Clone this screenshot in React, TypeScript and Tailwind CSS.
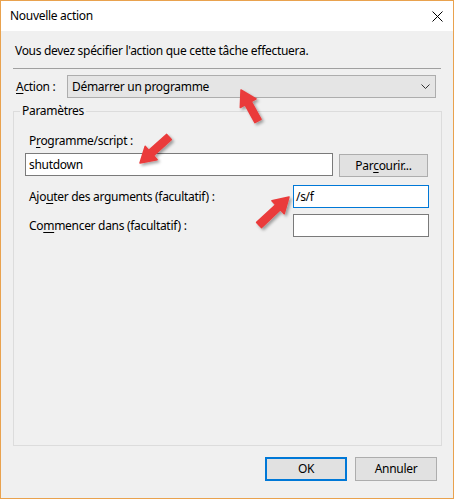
import React from "react";

function arrowPoints(tx: number, ty: number, sx: number, sy: number) {
  const dx = tx - sx;
  const dy = ty - sy;
  const len = Math.hypot(dx, dy);
  const ux = dx / len;
  const uy = dy / len;
  const px = -uy;
  const py = ux;
  const headLen = 15;
  const hw = 9;
  const sw = 3.5;
  const bx = tx - ux * headLen;
  const by = ty - uy * headLen;
  const pts = [
    [sx + px * sw, sy + py * sw],
    [bx + px * sw, by + py * sw],
    [bx + px * hw, by + py * hw],
    [tx, ty],
    [bx - px * hw, by - py * hw],
    [bx - px * sw, by - py * sw],
    [sx - px * sw, sy - py * sw],
  ];
  return pts.map((p) => p.map((v) => v.toFixed(1)).join(",")).join(" ");
}

const arrows = [
  [241, 90, 258, 121],
  [140, 163, 169, 137],
  [289, 197, 259, 225],
];

function U({ children }: { children: React.ReactNode }) {
  return <span className="underline underline-offset-[2px] decoration-1">{children}</span>;
}

export default function App() {
  return (
    <div className="w-[454px] h-[500px] bg-white">
      <div className="relative w-[454px] h-[499px] border border-[#e9a24e] bg-[#f0f0f0] font-['Noto_Sans',sans-serif] text-[12px] leading-[16px] tracking-[-0.3px] text-black flex flex-col">
        <div className="h-[30px] bg-white flex items-center justify-between pl-[9px] pr-[10px]">
          <span>Nouvelle action</span>
          <svg width="11" height="11" viewBox="0 0 11 11">
            <path d="M0.5 0.5 L10.5 10.5 M10.5 0.5 L0.5 10.5" stroke="#000" strokeWidth="1" fill="none" />
          </svg>
        </div>
        <div className="px-[12px] flex flex-col">
          <p className="mt-[12px] pl-[2px]">Vous devez spécifier l'action que cette tâche effectuera.</p>
          <div className="mt-[9px] h-px bg-[#a0a0a0]" />
          <div className="mt-[6px] flex items-center pr-[5px]">
            <span className="w-[54px] pl-[3px]">
              <U>A</U>ction :
            </span>
            <div className="flex-1 h-[23px] border border-[#adadad] bg-[#e5e5e5] flex items-center justify-between pl-[4px] pr-[5px]">
              <span>Démarrer un programme</span>
              <svg width="9" height="5" viewBox="0 0 9 5">
                <polyline points="0.5,0.5 4.5,4.5 8.5,0.5" stroke="#333" strokeWidth="1" fill="none" />
              </svg>
            </div>
          </div>
          <fieldset className="mt-[5px] h-[343px] border border-[#dcdcdc] pl-[11px] pr-[12px]">
            <legend className="-ml-[5px] px-[2px]">Paramètres</legend>
            <div className="mt-[14px] pl-[4px]">
              P<U>r</U>ogramme/script :
            </div>
            <div className="mt-[4px] flex items-start">
              <div className="w-[308px] h-[23px] border border-[#7a7a7a] bg-white pl-[3px] flex items-center">shutdown</div>
              <div className="ml-[6px] mt-[1px] w-[89px] h-[23px] border border-[#adadad] bg-[#e1e1e1] flex items-center justify-center">
                <span>
                  Par<U>c</U>ourir...
                </span>
              </div>
            </div>
            <div className="mt-[8px] flex items-center">
              <span className="w-[268px] pl-[4px]">
                Ajo<U>u</U>ter des arguments (facultatif) :
              </span>
              <div className="w-[136px] h-[23px] border border-[#0078d7] bg-white pl-[2px] flex items-center">/s/f</div>
            </div>
            <div className="mt-[6px] flex items-center">
              <span className="w-[268px] pl-[4px]">
                Co<U>m</U>mencer dans (facultatif) :
              </span>
              <div className="w-[136px] h-[23px] border border-[#7a7a7a] bg-white" />
            </div>
          </fieldset>
        </div>
        <div className="mt-[11px] flex justify-end gap-[8px] pr-[16px]">
          <div className="w-[82px] h-[24px] border-2 border-[#0078d7] bg-[#e1e1e1] flex items-center justify-center">OK</div>
          <div className="w-[82px] h-[24px] border border-[#adadad] bg-[#e1e1e1] flex items-center justify-center">Annuler</div>
        </div>
        <svg className="absolute left-[-1px] top-[-1px] pointer-events-none" width="454" height="500" viewBox="0 0 454 500">
          <defs>
            <filter id="sh" x="-50%" y="-50%" width="200%" height="200%">
              <feDropShadow dx="2" dy="2" stdDeviation="1.5" floodColor="#000" floodOpacity="0.35" />
            </filter>
          </defs>
          {arrows.map((a, i) => (
            <polygon
              key={i}
              points={arrowPoints(a[0], a[1], a[2], a[3])}
              fill="#ea3b3b"
              stroke="#ea3b3b"
              strokeWidth="1.5"
              strokeLinejoin="round"
              filter="url(#sh)"
            />
          ))}
        </svg>
      </div>
    </div>
  );
}
